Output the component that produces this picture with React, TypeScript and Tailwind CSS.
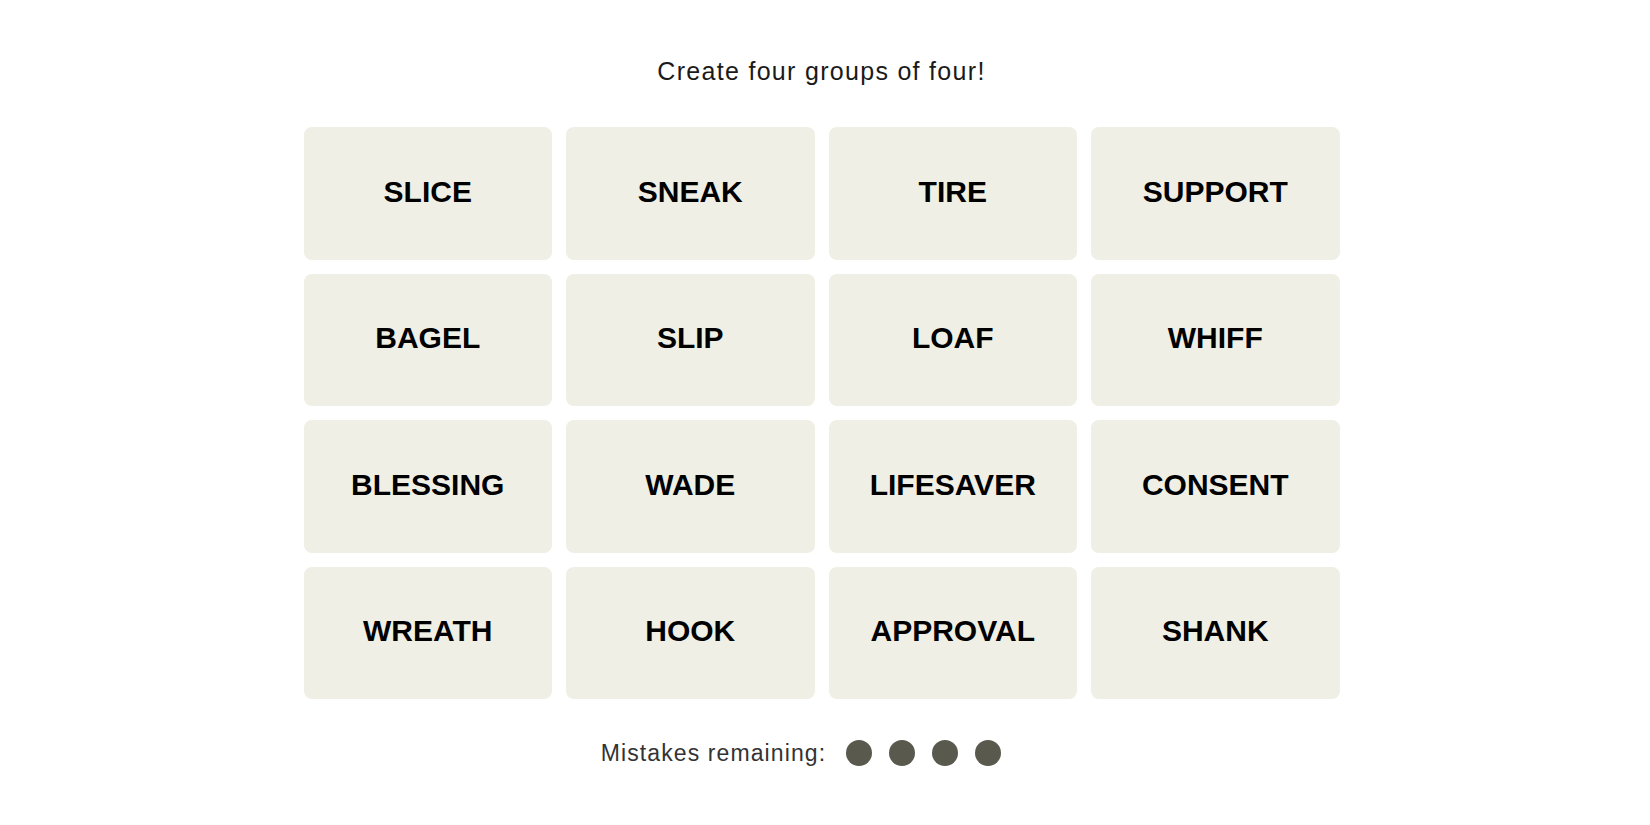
import React from "react";

// ── Data ─────────────────────────────────────────────────────────────

const WORDS = [
	"SLICE", "SNEAK", "TIRE", "SUPPORT",
	"BAGEL", "SLIP", "LOAF", "WHIFF",
	"BLESSING", "WADE", "LIFESAVER", "CONSENT",
	"WREATH", "HOOK", "APPROVAL", "SHANK",
];

const MISTAKES_LEFT = 4;

// ── Tile ─────────────────────────────────────────────────────────────

function Tile({ word }: { word: string }) {
	return (
		<button
			type="button"
			className="flex h-[132.5px] items-center justify-center rounded-lg bg-[#efefe6] pb-[4px] text-[30px] font-bold uppercase text-black"
		>
			{word}
		</button>
	);
}

// ── Main Page ────────────────────────────────────────────────────────

export default function App() {
	return (
		<div
			className="flex min-h-screen flex-col items-center bg-white pr-[7px] pt-[57px]"
			style={{ fontFamily: '"Liberation Sans", Arial, sans-serif' }}
		>
			<p className="h-[28px] text-[25px] leading-[28px] tracking-[1.3px] text-[#1a1a1a]">
				Create four groups of four!
			</p>

			<div className="mt-[42px] grid grid-cols-[repeat(4,248.5px)] gap-[14px]">
				{WORDS.map((w) => (
					<Tile key={w} word={w} />
				))}
			</div>

			<div className="mt-[41px] flex h-[26px] items-center pr-[41px]">
				<span className="text-[23px] tracking-[1.1px] text-[#333]">Mistakes remaining:</span>
				<div className="ml-[20px] flex gap-[17px]">
					{Array.from({ length: MISTAKES_LEFT }).map((_, i) => (
						<span key={i} className="h-[26px] w-[26px] rounded-full bg-[#5a594e]" />
					))}
				</div>
			</div>
		</div>
	);
}
